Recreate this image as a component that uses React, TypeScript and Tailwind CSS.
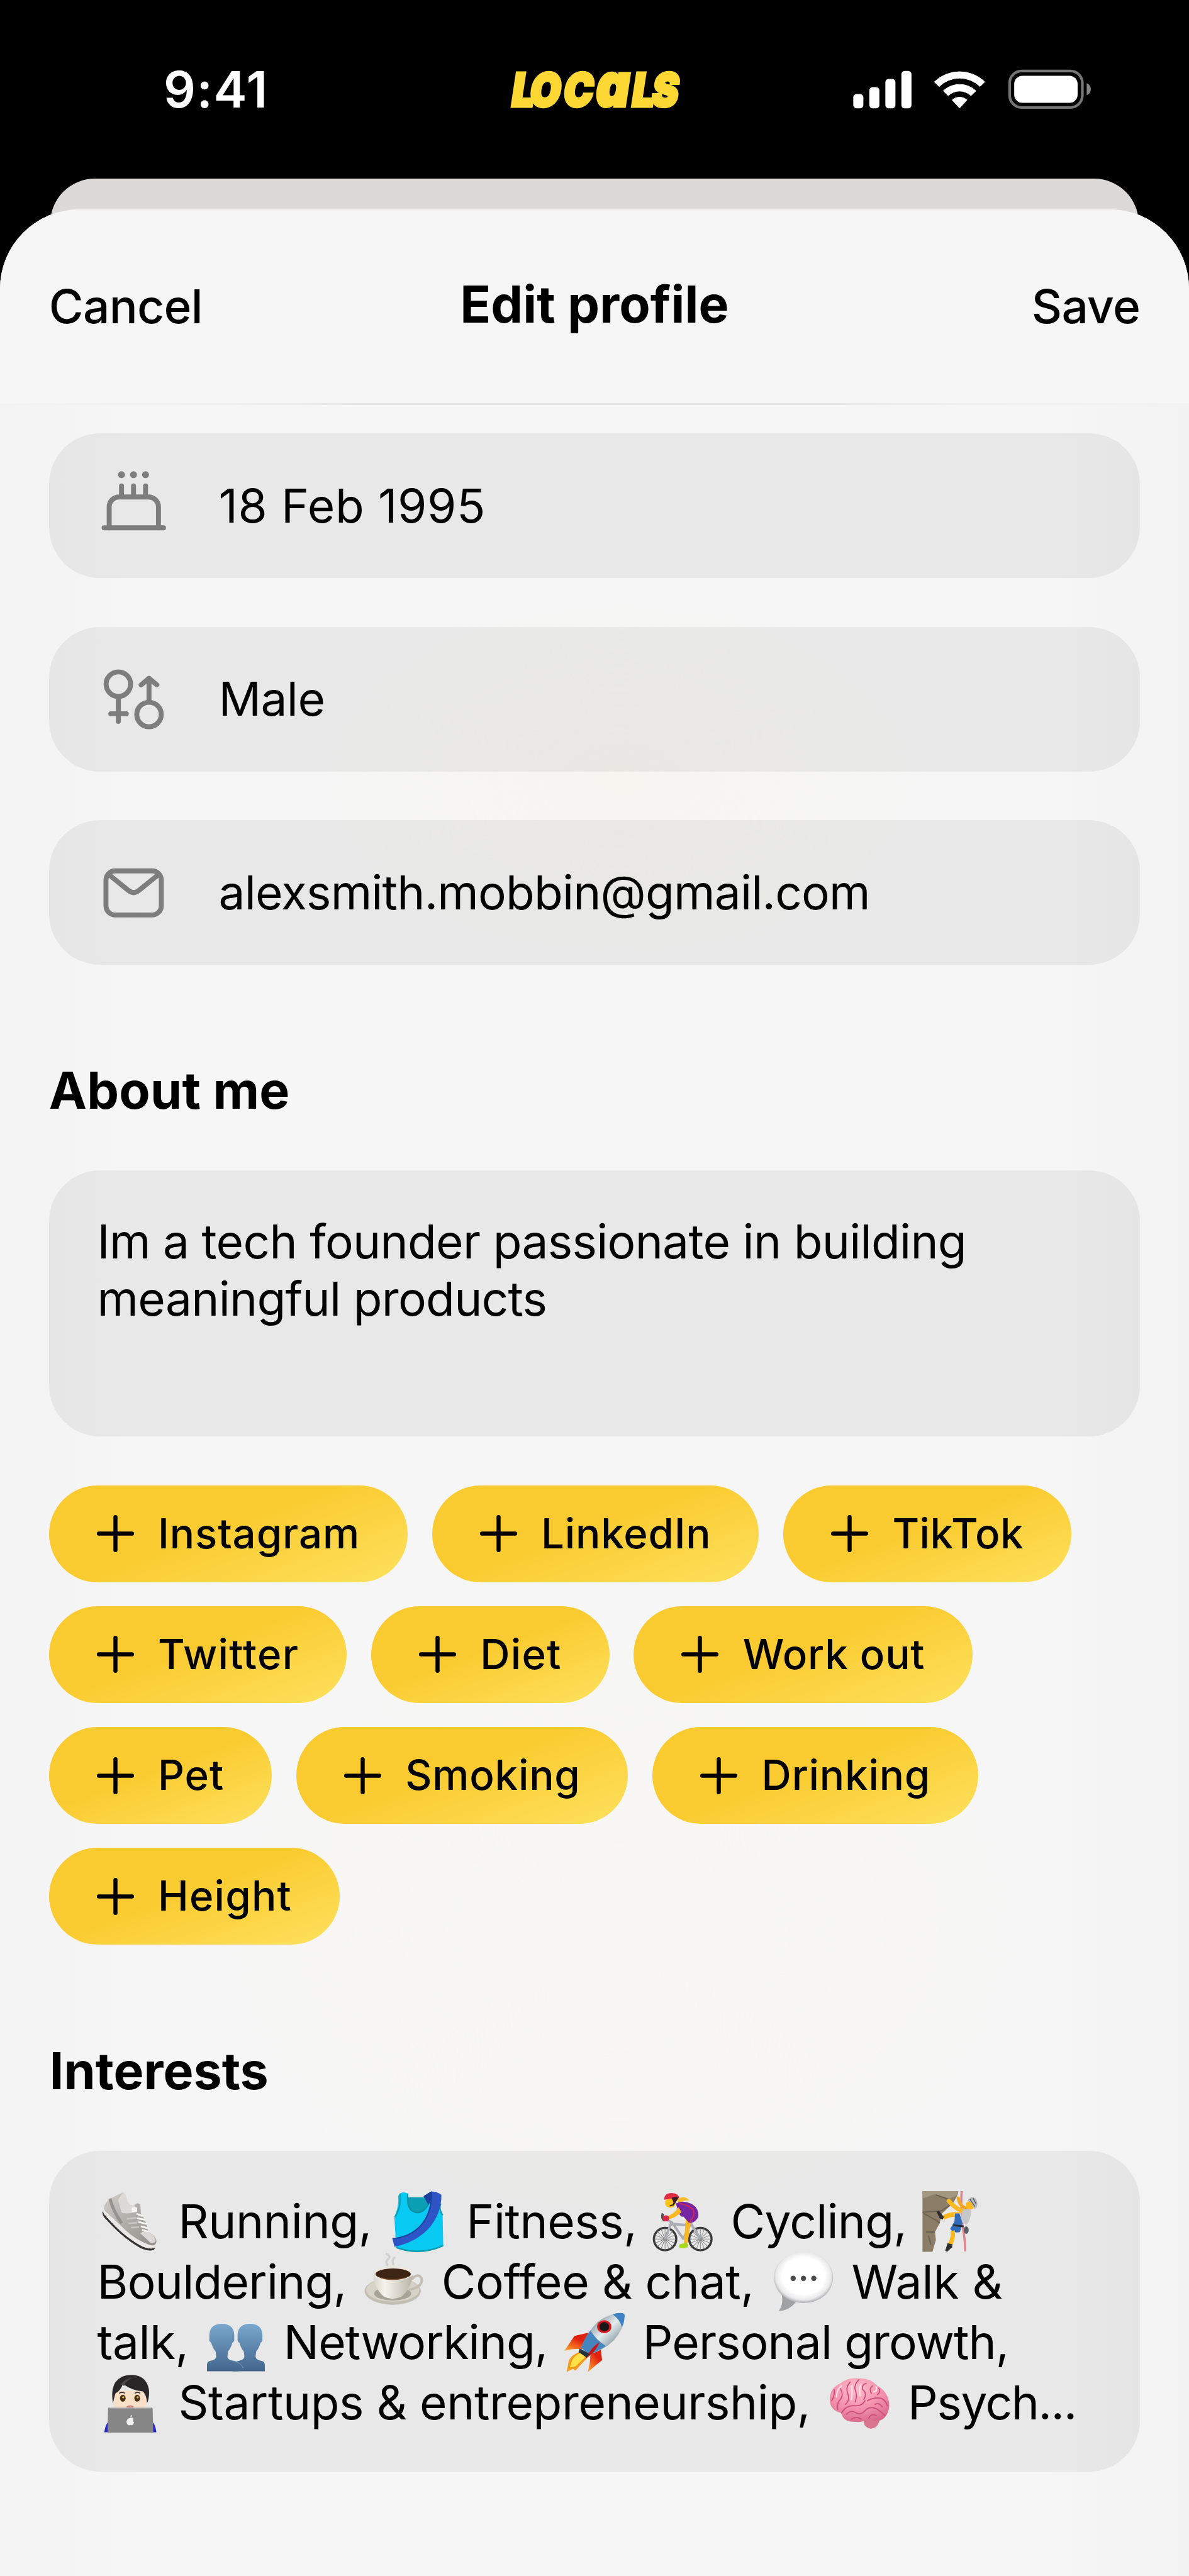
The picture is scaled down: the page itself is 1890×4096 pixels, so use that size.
import type { ReactNode } from 'react';
import clsx from 'clsx';

/* ---------- Status bar ---------- */

function SignalIcon() {
  return (
    <svg viewBox="114 66 286 186" className="w-[95px] h-[62px]" fill="#fff">
      <rect x="115" y="180" width="49" height="70" rx="16" />
      <rect x="193" y="147" width="49" height="103" rx="16" />
      <rect x="271" y="107" width="49" height="143" rx="16" />
      <rect x="349" y="68" width="49" height="182" rx="16" />
    </svg>
  );
}

function WifiIcon() {
  return (
    <svg viewBox="504 66 252 186" className="w-[84px] h-[62px]" fill="#fff" stroke="#fff" strokeWidth="3" strokeLinejoin="round">
      <path d="M508 121A177 177 0 0 1 752 121L729 144A141 141 0 0 0 531 144Z" />
      <path d="M551 165A115 115 0 0 1 709 165L685 188A80 80 0 0 0 575 188Z" />
      <path d="M594 209A54 54 0 0 1 666 209L630 248Z" />
    </svg>
  );
}

function BatteryIcon() {
  return (
    <svg viewBox="860 62 406 194" className="w-[135px] h-[65px]">
      <rect x="869" y="70" width="353" height="177" rx="58" fill="none" stroke="#757575" strokeWidth="13" />
      <rect x="891" y="93" width="308" height="132" rx="40" fill="#fff" />
      <path d="M1243 129C1256 134 1263 145 1263 158S1256 182 1243 187Z" fill="#858585" />
    </svg>
  );
}

function Logo() {
  return (
    <svg viewBox="-20 -60 340 180" className="w-[340px] h-[180px] overflow-visible" role="img" aria-label="Locals">
      <g transform="translate(6 59) skewX(-8.6) scale(0.86 1)">
        <text
          x="-3 31 94 0 0 0"
          y="0"
          className="font-['Inter',sans-serif] font-black text-[74px]"
          fill="#fdd835"
          stroke="#fdd835"
          strokeWidth="5"
        >
          LOC
          <tspan x="154" className="text-[97px] [font-feature-settings:'cv11']">a</tspan>
          <tspan x="223 260">LS</tspan>
        </text>
      </g>
    </svg>
  );
}

function StatusBar() {
  return (
    <div className="h-[288px] flex items-start justify-between pl-[264px] pr-[158px] relative">
      <span className="mt-[94px] leading-[100px] text-[81px] font-semibold tracking-[1.6px] text-white">9:41</span>
      <div className="absolute left-[800px] top-[53px]">
        <Logo />
      </div>
      <div className="mt-[112px] flex items-center gap-[35px]">
        <SignalIcon />
        <WifiIcon />
        <BatteryIcon />
      </div>
    </div>
  );
}

/* ---------- Field icons ---------- */

const iconStroke = { fill: 'none', stroke: '#7d7d7d', strokeWidth: 8, strokeLinecap: 'round', strokeLinejoin: 'round' } as const;

function CakeIcon() {
  return (
    <svg viewBox="160 756 112 120" className="w-[112px] h-[120px]" {...iconStroke}>
      <g fill="#7d7d7d" stroke="none">
        <circle cx="195.7" cy="766" r="5.6" />
        <circle cx="215.1" cy="766" r="5.6" />
        <circle cx="234.5" cy="766" r="5.6" />
      </g>
      <path d="M195.7 784v16M215.1 784v16M234.5 784v16" />
      <path d="M175.8 851.8V818a16 16 0 0 1 16-16h47.6a16 16 0 0 1 16 16v33.8" />
      <path d="M167.6 851.8h96" />
    </svg>
  );
}

function GenderIcon() {
  return (
    <svg viewBox="160 1069 112 120" className="w-[112px] h-[120px]" {...iconStroke}>
      <circle cx="190.6" cy="1104.4" r="19.8" />
      <path d="M190.6 1124.5v40M178.4 1152.2h25" />
      <circle cx="240.1" cy="1153.4" r="19.8" />
      <path d="M240.1 1133v-38M227.4 1105.5l12.7-10.5 12.7 10.5" />
    </svg>
  );
}

function MailIcon() {
  return (
    <svg viewBox="160 1381 112 120" className="w-[112px] h-[120px]" {...iconStroke}>
      <rect x="170.6" y="1406.2" width="89.4" height="71.2" rx="15" />
      <path d="M174.5 1411.5L206.5 1437.5Q215.3 1445 224.1 1437.5L256.1 1411.5" />
    </svg>
  );
}

/* ---------- Interest emojis, each on a 98 x 98 canvas ---------- */

function Emoji({ label, children }: { label: string; children: ReactNode }) {
  return (
    <svg viewBox="0 0 98 98" role="img" aria-label={label} className="w-[98px] h-[98px] mr-[29px] shrink-0 overflow-visible">
      {children}
    </svg>
  );
}

function Shoe() {
  return (
    <Emoji label="Running shoe">
      <defs>
        <linearGradient id="shoe" x1="0" y1="0" x2="1" y2="1">
          <stop offset="0" stopColor="#cfcdca" />
          <stop offset="0.6" stopColor="#aaa6a2" />
          <stop offset="1" stopColor="#908c88" />
        </linearGradient>
      </defs>
      <path d="M5 33Q4 40 12 47Q38 76 66 92Q80 98 88 95L91 90Q60 84 8 34Z" fill="#3a3938" />
      <path d="M6 30Q5 36 13 44Q38 72 66 88Q80 95 89 92Q93 90 92 82L60 66L14 28Z" fill="#e9e8e6" />
      <path d="M7 29Q8 18 18 12L38 2Q43 5 45 17Q50 26 57 22Q60 18 66 21L67 36Q77 50 79 66Q93 74 92 82Q90 91 79 86Q56 78 34 55L9 32Z" fill="url(#shoe)" />
      <path d="M38 2Q43 5 45 17Q50 26 57 22L60 33Q48 38 36 35L30 14Z" fill="#dcdad8" />
      <path d="M17 12Q22 32 36 52" stroke="#96928e" strokeWidth="5" fill="none" />
      <path d="M66 68Q73 63 79 66Q92 74 91 81Q88 85 82 83Z" fill="#dbd9d6" />
      <path d="M44 45l16-2M47 52l14-1M51 59l13-1" stroke="#c9c7c4" strokeWidth="2.6" />
      <path d="M61 37l8 3M62 44l11 2M64 50l12 3M68 57l10 3M70 63l8 2" stroke="#f7f7f6" strokeWidth="2.8" strokeLinecap="round" />
      <rect x="52" y="26" width="9" height="8" rx="2" fill="#f4f4f3" />
      <path d="M9 40Q38 75 68 90Q80 96 88 93" stroke="#2f2e2d" strokeWidth="2.4" strokeDasharray="3 2" fill="none" />
    </Emoji>
  );
}

function Vest() {
  return (
    <Emoji label="Running shirt">
      <path d="M28 10H76L72 38Q50 44 32 36Z" fill="#0a9fb2" />
      <path d="M20 4Q26 0 32.6 4Q31 22 37 30Q46 38 57 32Q67 25 70 8Q74 0 86 6Q82 26 89 39L90 88Q52 106 14 91L11 42Q19 24 17 8Z" fill="#08c9f2" />
      <path d="M20 4Q23 24 12 42M86 20Q82 28 89 39M14 91Q52 105 90 88" fill="none" stroke="#0b9cae" strokeWidth="2.4" />
      <path d="M32.6 4Q31 22 37 30Q46 38 57 32Q67 25 70 8" fill="none" stroke="#0d8ea2" strokeWidth="2.2" />
      <path d="M58 8L71 0L74 8L66 22Z" fill="#1c3f9e" />
      <path d="M71 1Q78 0 87 6Q87 37 66 61Q45 83 11 90L8 77Q38 74 55 54Q70 33 71 1Z" fill="#2e55c5" />
      <path d="M71 1Q72 34 55 54Q38 74 8 77" fill="none" stroke="#1c3f9e" strokeWidth="2" />
    </Emoji>
  );
}

function Wheel({ cx }: { cx: number }) {
  return (
    <g fill="none" stroke="#3b3b3b">
      <circle cx={cx} cy="77.5" r="18" strokeWidth="3.6" />
      <path
        d={`M${cx - 17} 77.5h34M${cx} 60.5v34M${cx - 12} 65.5l24 24M${cx - 12} 89.5l24 -24M${cx - 16} 71l32 13M${cx - 16} 84l32 -13M${cx - 6.5} 61.5l13 32M${cx + 6.5} 61.5l-13 32`}
        stroke="#909090"
        strokeWidth="1.1"
      />
    </g>
  );
}

function Cyclist() {
  return (
    <Emoji label="Woman biking">
      <Wheel cx={20.5} />
      <Wheel cx={77.5} />
      <path d="M20.5 77.5L31 50L50 77L62 52L77.5 77.5M31 53L60 55M31 50L22 46" stroke="#a9adb3" strokeWidth="4" fill="none" strokeLinejoin="round" />
      <path d="M17 36Q14 44 20 48" stroke="#4e4e4e" strokeWidth="4" fill="none" />
      <path d="M40 13Q52 6 60 15Q50 14 42 20Z" fill="#f6bf2a" />
      <ellipse cx="29" cy="19" rx="8.5" ry="8" fill="#fcc21b" />
      <path d="M37 12L34 22L28 24" stroke="#2d2020" strokeWidth="2" fill="none" />
      <path d="M19 14Q19 3 31 3Q43 4 43 11Q38 15 35 20L31 12Z" fill="#df2c44" />
      <path d="M31 11Q39 8 42 11L36 21Z" fill="#3a1d22" />
      <path d="M54 44L62 48L57 84L51 84Z" fill="#fcb823" />
      <path d="M38 20Q48 14 62 20Q76 27 74 42Q68 53 59 51L50 41Q46 43 42 34Z" fill="#7626a3" />
      <path d="M44 20Q58 22 66 30Q70 40 60 50" stroke="#d32757" strokeWidth="2" fill="none" />
      <path d="M42 26L47 34Q36 44 25 46L23 41Q36 37 42 26Z" fill="#fcb823" />
      <circle cx="22" cy="44" r="5" fill="#d9264a" />
      <path d="M44 86l10-3 4 3-1 5q-8 3-14 0z" fill="#a8d820" />
    </Emoji>
  );
}

function Climber() {
  return (
    <Emoji label="Person climbing">
      <path d="M0.4 0.2H58.5Q56 12 47 22L32 36L28 52L20.6 66L22 79L16.4 98H0.4Z" fill="#8b7d66" />
      <path d="M0.4 0.2H58L54 8L44 12L20 5L0.4 12Z" fill="#a49781" />
      <path d="M0.4 34L30 32L46 22M22 6L44 14M2 36L24 48L28 52M6 66L20 66M10 72L14 86" stroke="#6c6150" strokeWidth="2" fill="none" />
      <path d="M63.5 0Q62 40 66 62T69 97.5" stroke="#e2848e" strokeWidth="3.6" fill="none" />
      <path d="M58 11Q60 24 71 28" stroke="#f2a81d" strokeWidth="5" fill="none" strokeLinecap="round" />
      <path d="M43 16Q52 27 66 33" stroke="#fbb91f" strokeWidth="7" fill="none" strokeLinecap="round" />
      <ellipse cx="77" cy="23" rx="7" ry="7" fill="#fbb91f" />
      <path d="M73 15Q80 6 87 13Q92 22 86 29Q81 27 81 20Z" fill="#b9bcc0" />
      <path d="M77 13l8 12M82 11l5 10" stroke="#55585c" strokeWidth="1.4" />
      <path d="M64 32Q72 26 79 31Q79 44 72 54L62 50Z" fill="#c5c7ca" />
      <path d="M60 38Q46 36 34 43" stroke="#fbb91f" strokeWidth="7.5" fill="none" />
      <path d="M53 36L60 36L65 52L61 66Q51 69 45 61L52 49Z" fill="#2f6bb8" />
      <path d="M50 55L67 57" stroke="#2b2d31" strokeWidth="3" />
      <ellipse cx="71" cy="63" rx="4" ry="6" fill="#5a5d61" />
      <path d="M49 64Q51 74 45 86" stroke="#fbb91f" strokeWidth="7" fill="none" />
      <path d="M23 33l4-1 8 10-2 4-5-2z" fill="#2c2d31" />
      <path d="M41 84l8 2-1 5-8 7-3-2z" fill="#2c2d31" />
    </Emoji>
  );
}

function Coffee() {
  return (
    <Emoji label="Hot beverage">
      <defs>
        <linearGradient id="cup" x1="0" x2="1">
          <stop offset="0" stopColor="#d8d4ca" />
          <stop offset="0.3" stopColor="#f6f3ec" />
          <stop offset="1" stopColor="#b9b3a6" />
        </linearGradient>
      </defs>
      <ellipse cx="48" cy="64" rx="45.5" ry="22" fill="#c2beb3" />
      <ellipse cx="48" cy="62" rx="43" ry="19" fill="#d6d2c8" />
      <ellipse cx="48" cy="68" rx="30" ry="11" fill="#a8a397" />
      <path d="M79 45Q86 36 92 40Q98 46 92 54Q86 60 74 62" stroke="#c4beb2" strokeWidth="4" fill="none" />
      <path d="M16 35Q18 60 34 73Q48 80 62 73Q78 60 81 35Z" fill="url(#cup)" />
      <ellipse cx="48.7" cy="35" rx="32.7" ry="11.5" fill="#ebe7de" />
      <ellipse cx="48.7" cy="36.5" rx="28.5" ry="9" fill="#3e2415" />
      <path d="M22 39Q48 50 75 39Q64 46 48 46T22 39Z" fill="#7a4a2a" />
      <path d="M40 22Q35 16 41 12Q46 8 38 4M49 21Q46 14 51 10" stroke="#c9c9c9" strokeWidth="3.5" fill="none" strokeLinecap="round" opacity="0.8" />
    </Emoji>
  );
}

function Bubble() {
  return (
    <Emoji label="Speech balloon">
      <defs>
        <radialGradient id="bubble" cx="0.5" cy="0.47" r="0.53">
          <stop offset="0.68" stopColor="#ffffff" />
          <stop offset="0.88" stopColor="#e9e9ea" />
          <stop offset="1" stopColor="#a9aaac" />
        </radialGradient>
      </defs>
      <path d="M13 66Q18 84 9 96Q26 96 38 80Z" fill="#a0a1a3" />
      <ellipse cx="49" cy="42" rx="47.8" ry="41.4" fill="url(#bubble)" />
      <circle cx="32.3" cy="43.5" r="4.3" fill="#4d4d4d" />
      <circle cx="48.9" cy="43.5" r="4.3" fill="#4d4d4d" />
      <circle cx="65.6" cy="43.5" r="4.3" fill="#4d4d4d" />
    </Emoji>
  );
}

const bust = 'M3 96V86Q3 80 9 79Q18 77 18 72L17 64Q12 58 10 50Q6 48 7 43Q5 19.4 27 19.4T47 43Q48 48 44 50Q42 58 37 64L36 72Q36 77 45 79Q51 80 54 86V96Z';

function People() {
  return (
    <Emoji label="Busts in silhouette">
      <defs>
        <linearGradient id="bust" gradientUnits="userSpaceOnUse" x1="0" y1="19" x2="0" y2="96">
          <stop offset="0" stopColor="#79a7cd" />
          <stop offset="1" stopColor="#43658c" />
        </linearGradient>
      </defs>
      <path d={bust} fill="url(#bust)" transform="translate(99.5 0) scale(-1 1)" />
      <path d={bust} fill="url(#bust)" />
      <path d="M45 79Q57 81 62 91" stroke="#6f97bd" strokeWidth="1.2" fill="none" />
    </Emoji>
  );
}

function Rocket() {
  return (
    <Emoji label="Rocket">
      <defs>
        <linearGradient id="hull" x1="0" y1="0" x2="1" y2="1">
          <stop offset="0.2" stopColor="#7d8f9c" />
          <stop offset="0.5" stopColor="#e4ecec" />
          <stop offset="0.8" stopColor="#7d9098" />
        </linearGradient>
        <linearGradient id="fin" x1="0.8" y1="0" x2="0.2" y2="1">
          <stop offset="0.4" stopColor="#e3210f" />
          <stop offset="1" stopColor="#fb9a2d" />
        </linearGradient>
      </defs>
      <path d="M26 64Q10 70 7 80L4 97L14 92L18 95L24 88L42 69Z" fill="#f79a1c" />
      <path d="M28 65Q14 72 12 80L9 90L18 88L38 69Z" fill="#ffe24a" />
      <path d="M0.4 62.8L16.4 38.8L43 32.8L31 60Q14 59 0.4 62.8Z" fill="url(#fin)" />
      <path d="M58 52L61 78L38 97Q42 82 42 70Z" fill="url(#fin)" />
      <path d="M27 58Q36 34 54 16Q74 1 94 2Q99 3 97 10Q96 28 80 46Q64 62 40 69Z" fill="url(#hull)" />
      <path d="M27 58Q33 42 42 30Q52 46 67 55Q54 64 40 69Z" fill="#4684bd" />
      <path d="M78 4Q86 1 94 2Q99 3 97 10Q97 17 93 25Q90 12 78 4Z" fill="#3f83c4" />
      <path d="M57 49Q44 56 34 76Q50 66 57 49Z" fill="#c6160f" />
      <path d="M25 59L41 68L36 74L23 65Z" fill="#28323a" />
      <ellipse cx="64.5" cy="24" rx="11.5" ry="10.5" fill="#d8191f" />
      <ellipse cx="64.5" cy="24" rx="8" ry="7.4" fill="#1a1719" />
    </Emoji>
  );
}

function Technologist() {
  return (
    <Emoji label="Technologist">
      <path d="M8 97Q10 80 20 76H80Q90 80 92 97Z" fill="#2a28c4" />
      <path d="M23 30H76V50Q72 66 50 66T23 50Z" fill="#f8dfc8" />
      <path d="M22 50Q18 28 26 16Q36 3 54 4.4Q76 6 80 28Q81 42 77 50Q76 36 70 31Q54 30 38 19Q34 30 26 34Q24 40 22 50Z" fill="#282627" />
      <path d="M34 20Q42 10 54 9Q42 14 40 22Z" fill="#4c494a" />
      <ellipse cx="37.8" cy="42" rx="4.6" ry="5.6" fill="#4a3315" />
      <ellipse cx="61" cy="42" rx="4.6" ry="5.6" fill="#4a3315" />
      <circle cx="38.5" cy="40.5" r="1.6" fill="#e6c15a" />
      <circle cx="61.8" cy="40.5" r="1.6" fill="#e6c15a" />
      <path d="M32 34q5-3 9 0M57 34q5-3 9 0" stroke="#3a3434" strokeWidth="1.8" fill="none" />
      <path d="M44 55q6-3 11 0v3h-11z" fill="#c77b71" />
      <path d="M16 57H84Q86 57 86 60L87 97.4H13L14 60Q14 57 16 57Z" fill="#868686" />
      <path d="M16 57.6H84" stroke="#b9b9b9" strokeWidth="1.6" />
      <path d="M50 74q5-2 5 2-2 3 1 5-2 6-6 4-4 2-6-3-1-7 6-8zM50 73q0-3 3-4 0 3-3 4z" fill="#f2f2f2" />
    </Emoji>
  );
}

function Brain() {
  return (
    <Emoji label="Brain">
      <defs>
        <radialGradient id="brain" cx="0.45" cy="0.25" r="0.8">
          <stop offset="0" stopColor="#fdbccb" />
          <stop offset="0.6" stopColor="#f28daa" />
          <stop offset="1" stopColor="#d8668a" />
        </radialGradient>
      </defs>
      <path d="M56 76Q54 88 66 91Q78 92 82 76L78 68Z" fill="#d9768d" />
      <path d="M20 66Q2 62 1 46Q0 26 18 18Q30 8 48 10Q66 9 78 22Q94 30 97 50Q98 64 89 74Q80 82 64 76Q52 82 40 80Q22 80 20 66Z" fill="url(#brain)" />
      <path
        d="M4 46Q10 36 8 28M14 60Q12 50 18 44Q24 36 18 26M26 52Q34 46 30 34Q26 24 34 16M20 66Q26 54 40 54Q52 56 58 46M42 48Q46 38 42 28Q40 20 48 12M56 44Q62 34 54 28Q52 20 60 18M62 46Q72 40 84 42Q92 46 94 54M68 34Q64 26 70 22M78 36Q84 32 80 26M28 68Q36 60 44 66Q52 70 60 60M60 60Q68 54 78 60Q86 66 90 70M64 74Q68 66 76 70M36 76Q44 70 52 76M74 52Q80 48 86 56"
        stroke="#c94f78"
        strokeWidth="1.8"
        fill="none"
        strokeLinecap="round"
      />
      <path d="M12 40Q12 28 20 22M36 44Q38 30 36 22M50 38Q48 26 52 20M72 32Q78 30 76 24" stroke="#ffdbe3" strokeWidth="2.4" fill="none" strokeLinecap="round" />
    </Emoji>
  );
}

/* ---------- Page ---------- */

const fields = [
  { icon: <CakeIcon />, value: '18 Feb 1995', tracking: 'tracking-[0.6px]' },
  { icon: <GenderIcon />, value: 'Male', tracking: 'tracking-[-0.6px]' },
  { icon: <MailIcon />, value: 'alexsmith.mobbin@gmail.com', tracking: 'tracking-[-0.85px]' },
];

const chipRows = [
  [
    { label: 'Instagram', tracking: 'tracking-[0.9px]' },
    { label: 'LinkedIn', tracking: 'tracking-[0.8px]' },
    { label: 'TikTok', tracking: 'tracking-[0.5px]' },
  ],
  [
    { label: 'Twitter', tracking: 'tracking-[1.3px]' },
    { label: 'Diet', tracking: 'tracking-[1.3px]' },
    { label: 'Work out', tracking: 'tracking-[0.8px]' },
  ],
  [
    { label: 'Pet', tracking: 'tracking-[1px]' },
    { label: 'Smoking', tracking: 'tracking-[0.8px]' },
    { label: 'Drinking', tracking: 'tracking-[0.8px]' },
  ],
  [{ label: 'Height', tracking: 'tracking-[1.2px]' }],
];

function Card({ className, children }: { className?: string; children: ReactNode }) {
  return <div className={clsx('rounded-[82px] bg-black/[0.053]', className)}>{children}</div>;
}

function Chip({ label, tracking }: { label: string; tracking: string }) {
  return (
    <button className="h-[156px] flex items-center rounded-full pl-[76px] pr-[77px] bg-[linear-gradient(160deg,#facb30_45%,#fddf5a_95%)]">
      <svg viewBox="0 0 62 62" className="w-[62px] h-[62px] mr-[38px]" stroke="#000" strokeWidth="6.6" strokeLinecap="round">
        <path d="M31 4.3v53.4M4.3 31h53.4" />
      </svg>
      <span className={clsx('text-[66.5px] font-[530] whitespace-nowrap', tracking)}>{label}</span>
    </button>
  );
}

export default function App() {
  return (
    <div className="w-[1890px] h-[4096px] overflow-hidden bg-black">
      <div className="w-[1920px] h-[4162px] [zoom:0.984375] flex flex-col text-black font-['Inter','Liberation_Sans',sans-serif]">
        <StatusBar />

        {/* Sheet behind the current one */}
        <div className="mx-[81px] h-[90px] shrink-0 rounded-t-[72px] bg-[#dbdad8]" />

        <div className="-mt-[40px] flex-1 relative rounded-t-[128px] overflow-hidden bg-[radial-gradient(ellipse_500px_300px_at_1000px_920px,#f6f5f0,transparent),radial-gradient(ellipse_700px_500px_at_1000px_2780px,#f8f7f3,transparent),linear-gradient(to_right,#f3f3f3,#f6f6f6_12%,#f6f6f6_88%,#f2f2f2)]">
          {/* Header */}
          <div className="h-[313px] bg-[#f6f6f6] grid grid-cols-3 items-center px-[79px] text-[76px] font-[530] tracking-[-0.7px]">
            <button className="text-left">Cancel</button>
            <h1 className="mb-[6px] text-center whitespace-nowrap text-[82px] font-bold tracking-[0.1px]">Edit profile</h1>
            <button className="text-right">Save</button>
          </div>
          <div className="h-[3px] bg-[linear-gradient(to_right,transparent,#e8e8e8_30%,#e8e8e8_70%,transparent)]" />

          <div className="px-[79px] pt-[46px]">
            <div className="flex flex-col gap-[79px]">
              {fields.map(f => (
                <Card key={f.value} className="h-[233.5px] flex items-center pl-[81px]">
                  {f.icon}
                  <span className={clsx('ml-[81px] text-[76px] font-[420]', f.tracking)}>{f.value}</span>
                </Card>
              ))}
            </div>

            <h2 className="mt-[153px] leading-[100px] text-[82px] font-bold tracking-[0.2px]">About me</h2>
            <Card className="mt-[79px] h-[430px] pt-[69px] pl-[78px] text-[76px] font-[420] leading-[92.4px] tracking-[-0.75px]">
              <p>Im a tech founder passionate in building</p>
              <p>meaningful products</p>
            </Card>

            <div className="mt-[79px] flex flex-col gap-[39.2px]">
              {chipRows.map((row, i) => (
                <div key={i} className="flex gap-[39.5px]">
                  {row.map(chip => (
                    <Chip key={chip.label} {...chip} />
                  ))}
                </div>
              ))}
            </div>

            <h2 className="mt-[154px] pl-px leading-[100px] text-[82px] font-bold">Interests</h2>
            <Card className="mt-[79px] h-[518px] pt-[65px] pl-[78px] text-[76px] font-[420] whitespace-nowrap">
              <div className="h-[97.7px] flex items-center pl-[4px]">
                <Shoe />
                <span className="w-[338px] tracking-[-0.4px]">Running,</span>
                <Vest />
                <span className="w-[300px] tracking-[-0.5px]">Fitness,</span>
                <Cyclist />
                <span className="w-[309px] tracking-[-0.8px]">Cycling,</span>
                <Climber />
              </div>
              <div className="h-[97.7px] flex items-center">
                <span className="w-[429px] tracking-[-0.8px]">Bouldering,</span>
                <Coffee />
                <span className="w-[535px] tracking-[-0.4px]">Coffee &amp; chat,</span>
                <Bubble />
                <span>Walk &amp;</span>
              </div>
              <div className="h-[97.7px] flex items-center">
                <span className="w-[174px] tracking-[-0.5px]">talk,</span>
                <People />
                <span className="w-[453px] tracking-[-1px]">Networking,</span>
                <Rocket />
                <span className="tracking-[-0.95px]">Personal growth,</span>
              </div>
              <div className="h-[97.7px] flex items-center pl-[4px]">
                <Technologist />
                <span className="w-[1051px] tracking-[-0.45px]">Startups &amp; entrepreneurship,</span>
                <Brain />
                <span className="tracking-[-1.5px]">Psych...</span>
              </div>
            </Card>
          </div>
        </div>
      </div>
    </div>
  );
}
